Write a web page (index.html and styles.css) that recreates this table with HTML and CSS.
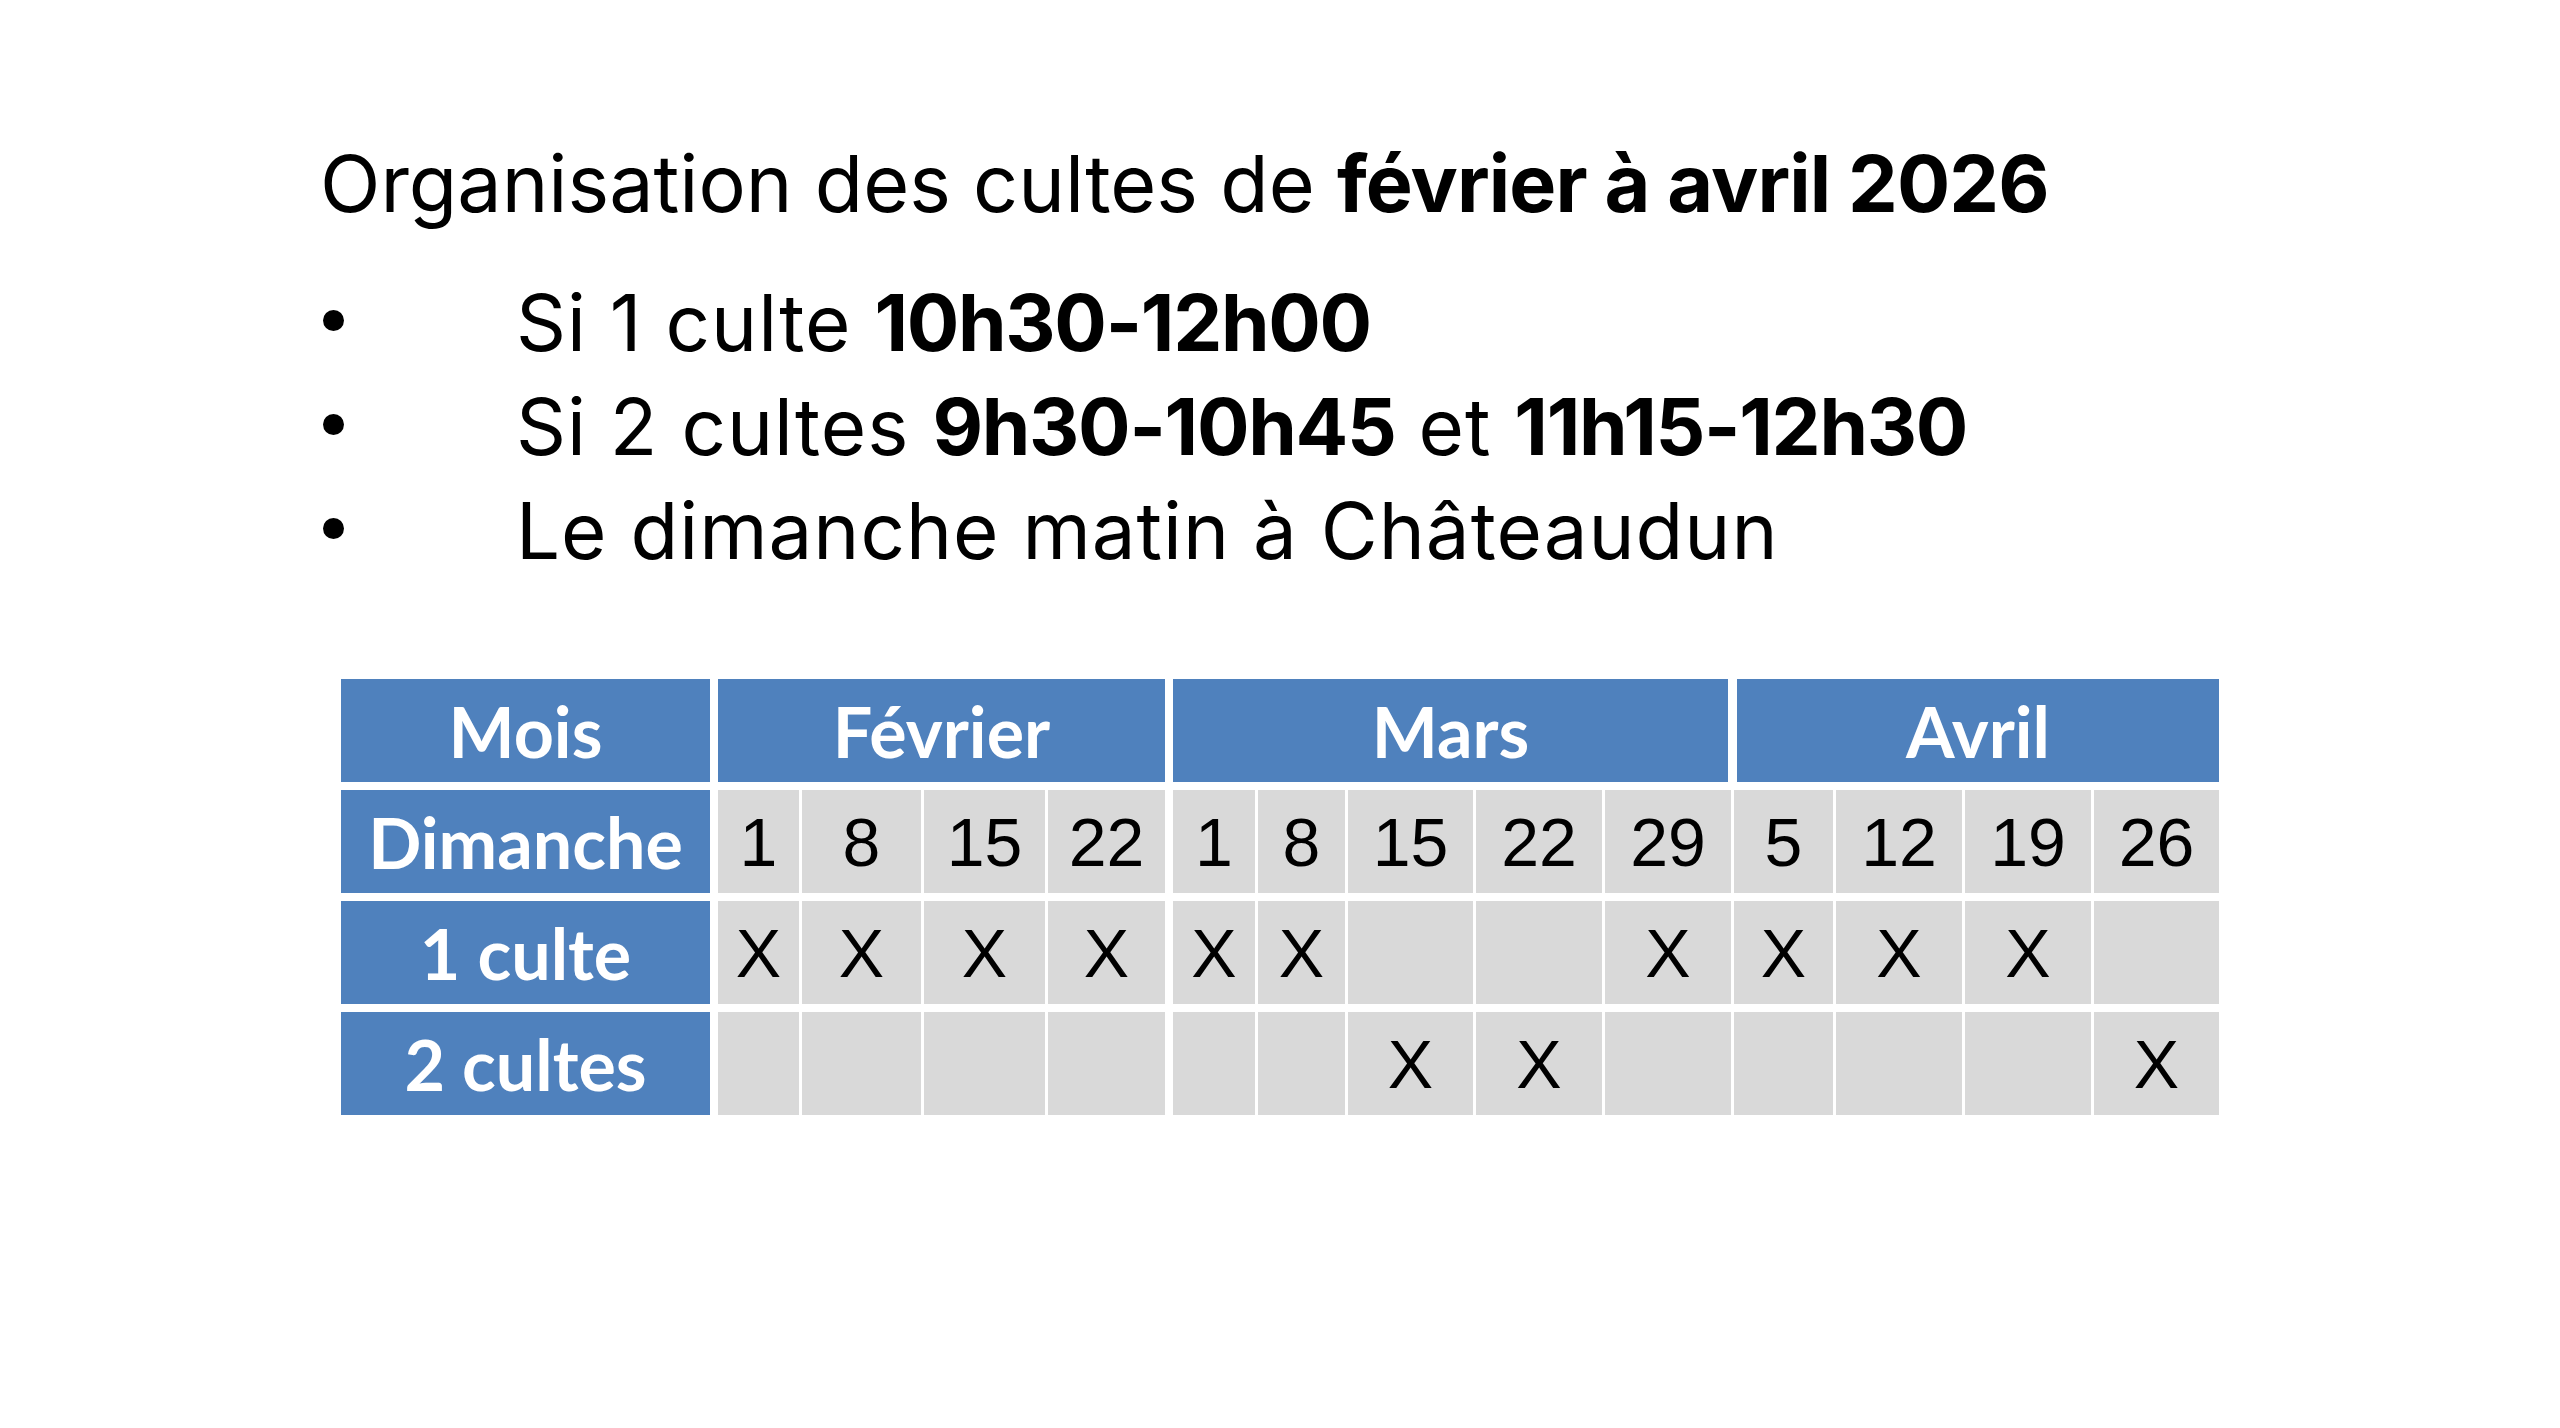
FILE: index.html
```html
<!DOCTYPE html>
<html lang="fr">
<head>
<meta charset="utf-8">
<title>Organisation des cultes</title>
<link rel="stylesheet" href="styles.css">
</head>
<body>
<main class="slide">
  <h1 class="title">Organisation des cultes de <b>février à avril 2026</b></h1>
  <ul class="points">
    <li><span class="dot"></span><span class="txt">Si 1 culte <b>10h30-12h00</b></span></li>
    <li><span class="dot"></span><span class="txt">Si 2 cultes <b>9h30-10h45</b> et <b>11h15-12h30</b></span></li>
    <li><span class="dot"></span><span class="txt">Le dimanche matin à Châteaudun</span></li>
  </ul>
  <div class="schedule">
    <div class="hd">Mois</div>
    <div class="hd month feb">Février</div>
    <div class="hd month mar">Mars</div>
    <div class="hd month apr">Avril</div>

    <div class="hd">Dimanche</div>
    <div class="c start">1</div><div class="c">8</div><div class="c">15</div><div class="c">22</div>
    <div class="c start">1</div><div class="c">8</div><div class="c">15</div><div class="c">22</div><div class="c">29</div>
    <div class="c">5</div><div class="c">12</div><div class="c">19</div><div class="c">26</div>

    <div class="hd">1 culte</div>
    <div class="c start">X</div><div class="c">X</div><div class="c">X</div><div class="c">X</div>
    <div class="c start">X</div><div class="c">X</div><div class="c"></div><div class="c"></div><div class="c">X</div>
    <div class="c">X</div><div class="c">X</div><div class="c">X</div><div class="c"></div>

    <div class="hd">2 cultes</div>
    <div class="c start"></div><div class="c"></div><div class="c"></div><div class="c"></div>
    <div class="c start"></div><div class="c"></div><div class="c">X</div><div class="c">X</div><div class="c"></div>
    <div class="c"></div><div class="c"></div><div class="c"></div><div class="c">X</div>
  </div>
</main>
</body>
</html>
```
FILE: styles.css
```css
html, body {
  margin: 0;
  padding: 0;
  background: #ffffff;
}

.slide {
  width: 2560px;
  height: 1428px;
  box-sizing: border-box;
  padding: 133px 0 0 320px;
  color: #000;
}

.title {
  margin: 0;
  font-family: Inter, "Liberation Sans", sans-serif;
  font-weight: 400;
  font-size: 79px;
  line-height: 100px;
  white-space: nowrap;
}

.title b {
  font-weight: 700;
  letter-spacing: -0.9px;
}

.points {
  list-style: none;
  margin: 38px 0 0 0;
  padding: 0;
  font-family: Inter, "Liberation Sans", sans-serif;
  font-size: 78px;
  line-height: 104px;
}

.points li {
  display: flex;
  align-items: flex-start;
  height: 104px;
}

.points .txt {
  letter-spacing: 1px;
}

.points b {
  font-weight: 700;
  letter-spacing: -1.3px;
}

.dot {
  flex: none;
  width: 21px;
  height: 21px;
  border-radius: 50%;
  background: #000;
  margin: 39px 0 0 3px;
}

.txt {
  margin-left: 172px;
  white-space: nowrap;
}

.schedule {
  display: grid;
  grid-template-columns: 369px 86px 119px 121px 117px 87px 87px 125px 126px 126px 99px 126px 126px 125px;
  grid-auto-rows: 103px;
  column-gap: 3px;
  row-gap: 8px;
  margin: 96px 0 0 21px;
  width: max-content;
}

.hd {
  background: #4f81bd;
  color: #fff;
  font-family: Lato, "Open Sans", sans-serif;
  font-weight: 700;
  font-size: 70px;
  display: flex;
  align-items: center;
  justify-content: center;
  white-space: nowrap;
}

.month.feb {
  grid-column: span 4;
  margin-left: 5px;
}

.month.mar {
  grid-column: span 5;
  margin-left: 5px;
  margin-right: 3px;
}

.month.apr {
  grid-column: span 4;
  margin-left: 3px;
}

.c {
  background: #d9d9d9;
  font-family: "Liberation Sans", Arial, sans-serif;
  font-size: 68px;
  display: flex;
  align-items: center;
  justify-content: center;
}

.c.start {
  margin-left: 5px;
}
```
